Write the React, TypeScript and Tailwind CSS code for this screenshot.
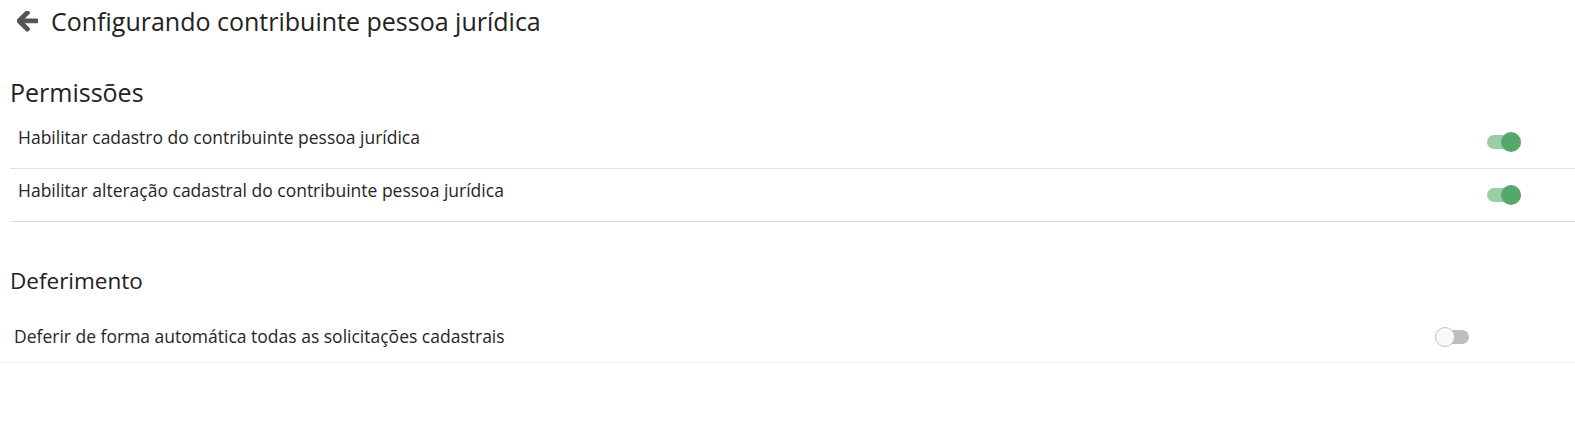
import React from "react";

function Toggle({ on }: { on: boolean }) {
  return (
    <div className="relative w-[34px] h-[20px] flex items-center">
      <div className={`w-[34px] h-[14px] rounded-full ${on ? "bg-[#9bcea6]" : "bg-[#bdbdbd]"}`} />
      <div
        className={`absolute top-0 w-[20px] h-[20px] rounded-full ${
          on ? "right-0 bg-[#55a76a]" : "left-0 bg-[#fafafa] border border-[#c4c4c4]"
        }`}
      />
    </div>
  );
}

export default function App() {
  return (
    <div className="w-[1575px] h-[428px] bg-white text-[#262626]" style={{ fontFamily: '"Open Sans", sans-serif' }}>
      <div className="flex items-center h-[42px] pl-[17px] pt-[1px]">
        <svg width="21" height="21" viewBox="0 0 448 448" className="mr-[13px]">
          <path
            fill="#545454"
            stroke="#545454"
            strokeWidth="24"
            strokeLinejoin="round"
            d="M257.5 413.8l-22.2 22.2c-9.4 9.4-24.6 9.4-33.9 0L7 241.7c-9.4-9.4-9.4-24.6 0-33.9L201.4 13.4c9.4-9.4 24.6-9.4 33.9 0l22.2 22.2c9.5 9.5 9.3 25-.4 34.3L136.6 184.5H424c13.3 0 24 10.7 24 24v32c0 13.3-10.7 24-24 24H136.6l120.5 114.8c9.8 9.3 10 24.8.4 34.3z"
            transform="translate(0,-14)"
          />
        </svg>
        <h1 className="text-[25px] leading-none text-[#222]">Configurando contribuinte pessoa jurídica</h1>
      </div>

      <div className="pl-[10px] mt-[36px]">
        <h2 className="text-[25px] leading-[28px] text-[#222]">Permissões</h2>
        <div className="mt-[10px]">
          <div className="flex items-center justify-between h-[53px] border-b border-[#e0e0e0] pl-[8px] pr-[54px]">
            <span className="text-[17.5px] pb-[9px]">Habilitar cadastro do contribuinte pessoa jurídica</span>
            <Toggle on />
          </div>
          <div className="flex items-center justify-between h-[53px] border-b border-[#e0e0e0] pl-[8px] pr-[54px]">
            <span className="text-[17.5px] pb-[9px]">Habilitar alteração cadastral do contribuinte pessoa jurídica</span>
            <Toggle on />
          </div>
        </div>
      </div>

      <div className="mt-[45px]">
        <h2 className="pl-[10px] text-[22.5px] leading-[28px] text-[#222]">Deferimento</h2>
        <div className="mt-[16px] flex items-center justify-between h-[52px] border-b border-[#eeeeee] pl-[14px] pr-[106px]">
          <span className="text-[17.5px]">Deferir de forma automática todas as solicitações cadastrais</span>
          <Toggle on={false} />
        </div>
      </div>
    </div>
  );
}
